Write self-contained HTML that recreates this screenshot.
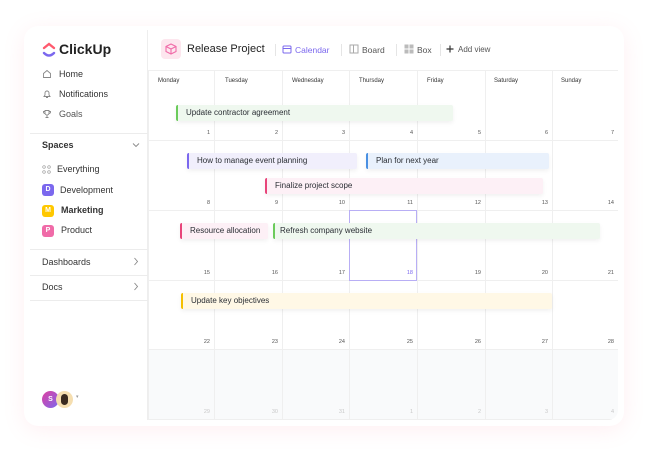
<!DOCTYPE html><html><head><style>
*{margin:0;padding:0;box-sizing:border-box}
body{width:648px;height:451px;background:#fff;font-family:"Liberation Sans",sans-serif;position:relative;overflow:hidden;color:#2a2e34}
.glow{position:absolute;left:24px;top:26px;width:600px;height:400px;border-radius:14px;box-shadow:0 4px 22px rgba(255,120,150,.12)}
.card{position:absolute;left:30px;top:30px;width:588px;height:390px;background:#fff;border-radius:10px;overflow:hidden}
.side{position:absolute;left:0;top:0;width:118px;height:390px;border-right:1px solid #eee}
.a{position:absolute;font-size:9px;color:#333}
.hr{position:absolute;left:0;width:118px;height:1px;background:#ececec}
.badge{position:absolute;width:12px;height:12px;border-radius:3px;color:#fff;font-size:7px;font-weight:bold;text-align:center;line-height:12px}
.v{position:absolute;top:40px;width:1px;height:350px;background:#efefef}
.h{position:absolute;left:118px;width:470px;height:1px;background:#efefef}
.d{position:absolute;top:48px;font-size:6px;color:#333}
.n{position:absolute;font-size:5.5px;color:#555;text-align:right;width:20px}
.ev{position:absolute;height:16px;font-size:8px;line-height:16px;padding-left:8px;border-left:2px solid;border-radius:2px;box-shadow:0 2px 5px rgba(0,0,0,.06);color:#2a2e34}
.ic{position:absolute}
</style></head><body>
<div class="glow"></div>
<div class="card">
<div class="side">
 <svg style="position:absolute;left:12px;top:12px" width="14" height="16" viewBox="0 0 14 16"><path d="M2 6 L7 2 L12 6" fill="none" stroke="#ff5a6e" stroke-width="2.4" stroke-linecap="round"/><path d="M2 11 Q7 16 12 11" fill="none" stroke="#7b68ee" stroke-width="2.4" stroke-linecap="round"/></svg>
 <div class="a" style="left:29px;top:11px;font-size:14px;font-weight:bold;color:#222">ClickUp</div>
 <svg class="ic" style="left:12px;top:39px" width="10" height="10" viewBox="0 0 10 10"><path d="M1.5 4.5 L5 1.5 L8.5 4.5 V8.5 H1.5Z" fill="none" stroke="#888" stroke-width=".9"/></svg><div class="a" style="left:29px;top:39px">Home</div>
 <svg class="ic" style="left:12px;top:59px" width="10" height="10" viewBox="0 0 10 10"><path d="M2 7.5 H8 L7 6 V4 A2 2 0 0 0 3 4 V6Z M4 8.5 H6" fill="none" stroke="#888" stroke-width=".9"/></svg><div class="a" style="left:29px;top:59px">Notifications</div>
 <svg class="ic" style="left:12px;top:79px" width="10" height="10" viewBox="0 0 10 10"><path d="M3 1.5 H7 V4 A2 2 0 0 1 3 4Z M3 2.5 H1.5 A1.5 1.5 0 0 0 3 4.5 M7 2.5 H8.5 A1.5 1.5 0 0 1 7 4.5 M5 6 V8 M3.5 8.5 H6.5" fill="none" stroke="#888" stroke-width=".9"/></svg><div class="a" style="left:29px;top:79px;color:#555">Goals</div>
 <div class="hr" style="top:103px"></div>
 <div class="a" style="left:12px;top:110px;font-weight:bold">Spaces</div>
 <svg class="ic" style="left:102px;top:112px" width="8" height="6"><path d="M1 1.5 L4 4.5 L7 1.5" fill="none" stroke="#888" stroke-width=".9"/></svg>
 <svg class="ic" style="left:12px;top:135px" width="9" height="9"><circle cx="2" cy="2" r="1.3" fill="none" stroke="#999" stroke-width=".7"/><circle cx="7" cy="2" r="1.3" fill="none" stroke="#999" stroke-width=".7"/><circle cx="2" cy="7" r="1.3" fill="none" stroke="#999" stroke-width=".7"/><circle cx="7" cy="7" r="1.3" fill="none" stroke="#999" stroke-width=".7"/></svg><div class="a" style="left:27px;top:134px">Everything</div>
 <div class="badge" style="left:12px;top:154px;background:#7b68ee">D</div><div class="a" style="left:30px;top:155px">Development</div>
 <div class="badge" style="left:12px;top:175px;background:#ffc800">M</div><div class="a" style="left:31px;top:175px;font-weight:bold">Marketing</div>
 <div class="badge" style="left:12px;top:195px;background:#f06ba8">P</div><div class="a" style="left:31px;top:195px">Product</div>
 <div class="hr" style="top:219px"></div>
 <div class="a" style="left:12px;top:227px">Dashboards</div>
 <svg class="ic" style="left:103px;top:227px" width="6" height="9"><path d="M1.5 1 L4.5 4.5 L1.5 8" fill="none" stroke="#888" stroke-width=".9"/></svg>
 <div class="hr" style="top:245px"></div>
 <div class="a" style="left:12px;top:252px">Docs</div>
 <svg class="ic" style="left:103px;top:252px" width="6" height="9"><path d="M1.5 1 L4.5 4.5 L1.5 8" fill="none" stroke="#888" stroke-width=".9"/></svg>
 <div class="hr" style="top:270px"></div>
 <div style="position:absolute;left:12px;top:361px;width:17px;height:17px;border-radius:50%;background:linear-gradient(135deg,#e040a0,#7b68ee);color:#fff;font-size:7px;font-weight:bold;text-align:center;line-height:17px">S</div>
 <div style="position:absolute;left:26px;top:361px;width:17px;height:17px;border-radius:50%;background:#f5deb0"><div style="margin:3px auto;width:7px;height:11px;border-radius:4px;background:#3a2a20"></div></div>
 <div class="a" style="left:46px;top:364px;font-size:5px;color:#999">▾</div>
</div>
<div style="position:absolute;left:131px;top:9px;width:20px;height:20px;border-radius:4px;background:#fde6ee"><svg width="20" height="20" viewBox="0 0 20 20"><path d="M10 5 L15 7.5 L15 12.5 L10 15 L5 12.5 L5 7.5Z M5 7.5 L10 10 L15 7.5 M10 10 L10 15" fill="none" stroke="#f06ba8" stroke-width="1.1"/></svg></div>
<div class="a" style="left:157px;top:13px;font-size:11px;color:#222">Release Project</div>
<div style="position:absolute;left:245px;top:14px;width:1px;height:12px;background:#e5e5e5"></div>
<svg style="position:absolute;left:252px;top:14px" width="10" height="10"><rect x="1" y="2" width="8" height="7" rx="1" fill="none" stroke="#7b68ee"/><line x1="1" y1="4.5" x2="9" y2="4.5" stroke="#7b68ee"/></svg>
<div class="a" style="left:265px;top:15px;color:#7b68ee;font-size:8.5px">Calendar</div>
<div style="position:absolute;left:311px;top:14px;width:1px;height:12px;background:#e5e5e5"></div>
<svg style="position:absolute;left:319px;top:14px" width="10" height="10"><rect x="1" y="1" width="8" height="8" fill="none" stroke="#aaa"/><line x1="4.5" y1="1" x2="4.5" y2="9" stroke="#aaa"/></svg>
<div class="a" style="left:332px;top:15px;color:#555;font-size:8.5px">Board</div>
<div style="position:absolute;left:366px;top:14px;width:1px;height:12px;background:#e5e5e5"></div>
<svg style="position:absolute;left:374px;top:14px" width="10" height="10"><rect x="0.5" y="0.5" width="4" height="4" fill="#bbb"/><rect x="5.5" y="0.5" width="4" height="4" fill="#bbb"/><rect x="0.5" y="5.5" width="4" height="4" fill="#bbb"/><rect x="5.5" y="5.5" width="4" height="4" fill="#bbb"/></svg>
<div class="a" style="left:387px;top:15px;color:#555;font-size:8.5px">Box</div>
<div style="position:absolute;left:410px;top:14px;width:1px;height:12px;background:#e5e5e5"></div>
<svg style="position:absolute;left:416px;top:15px" width="8" height="8"><path d="M4 0.5 V7.5 M0.5 4 H7.5" stroke="#333" stroke-width="1.2"/></svg>
<div class="a" style="left:428px;top:15px;color:#555;font-size:8px">Add view</div>
<div class="h" style="top:40px"></div>
<div style="position:absolute;left:118px;top:319px;width:470px;height:71px;background:#f9fafb"></div>
<div class="v" style="left:118px"></div><div class="v" style="left:184px"></div><div class="v" style="left:252px"></div><div class="v" style="left:319px"></div><div class="v" style="left:387px"></div><div class="v" style="left:455px"></div><div class="v" style="left:522px"></div>
<div class="h" style="top:110px"></div><div class="h" style="top:180px"></div><div class="h" style="top:250px"></div><div class="h" style="top:319px"></div><div class="h" style="top:389px"></div>
<div class="d" style="left:128px">Monday</div><div class="d" style="left:195px">Tuesday</div><div class="d" style="left:262px">Wednesday</div><div class="d" style="left:329px">Thursday</div><div class="d" style="left:397px">Friday</div><div class="d" style="left:464px">Saturday</div><div class="d" style="left:531px">Sunday</div>
<div style="position:absolute;left:319px;top:180px;width:68px;height:71px;border:1px solid #b8aef5"></div>
<div id="nums"></div>
<div class="ev" style="left:146px;top:75px;width:277px;background:#eff8ef;border-color:#6bcb5b">Update contractor agreement</div>
<div class="ev" style="left:157px;top:123px;width:170px;background:#f1effc;border-color:#7b68ee">How to manage event planning</div>
<div class="ev" style="left:336px;top:123px;width:183px;background:#e9f1fc;border-color:#4a90e2">Plan for next year</div>
<div class="ev" style="left:235px;top:148px;width:278px;background:#fdf0f6;border-color:#e8457a">Finalize project scope</div>
<div class="ev" style="left:150px;top:193px;width:88px;background:#fdf0f6;border-color:#e8457a">Resource allocation</div>
<div class="ev" style="left:243px;top:193px;width:327px;background:#eff8ef;border-color:#6bcb5b;padding-left:5px">Refresh company website</div>
<div class="ev" style="left:151px;top:263px;width:371px;background:#fff8e6;border-color:#f5c000">Update key objectives</div>
</div>
<script>
var xs=[184,252,319,387,455,522,588],ys=[100,170,240,309,379],h='';
var labs=[[1,2,3,4,5,6,7],[8,9,10,11,12,13,14],[15,16,17,18,19,20,21],[22,23,24,25,26,27,28],[29,30,31,1,2,3,4]];
for(var r=0;r<5;r++)for(var c=0;c<7;c++){var col=r==4?'#c8c8c8':(r==2&&c==3?'#7b68ee':'#555');h+='<div class="n" style="left:'+(xs[c]-24)+'px;top:'+ys[r]+'px;color:'+col+'">'+labs[r][c]+'</div>';}
document.getElementById('nums').outerHTML=h;
</script>
</body></html>
